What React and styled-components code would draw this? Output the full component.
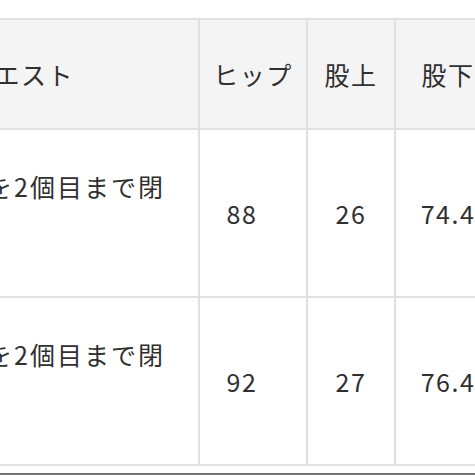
import React from 'react';
import styled, { createGlobalStyle } from 'styled-components';

const GlobalStyle = createGlobalStyle`
  html, body {
    margin: 0;
    padding: 0;
    background: #ffffff;
  }
  body {
    font-family: "Noto Sans CJK JP", "Noto Sans", sans-serif;
    color: #303030;
  }
`;

const Viewport = styled.div`
  width: 475px;
  height: 475px;
  overflow: hidden;
  padding-top: 18px;
  box-sizing: border-box;
`;

const SizeTable = styled.div`
  display: grid;
  grid-template-columns: 356px 108px 88px 106px;
  grid-template-rows: 110px;
  grid-auto-rows: 168px;
  margin-left: -158px;
  width: max-content;
  border-top: 2px solid #e0e0e0;
  border-left: 2px solid #e0e0e0;
`;

const Cell = styled.div`
  box-sizing: border-box;
  display: flex;
  align-items: center;
  justify-content: center;
  padding: 0 ${(p) => p.$padRight || 8}px 0 8px;
  border-right: 2px solid #e0e0e0;
  border-bottom: 2px solid #e0e0e0;
  background: ${(p) => (p.$head ? '#f4f4f4' : '#ffffff')};
  font-size: 25px;
  letter-spacing: 1.5px;
  line-height: 28px;
  white-space: nowrap;
`;

const NoteCell = styled(Cell)`
  align-items: flex-start;
  justify-content: flex-start;
  padding: 42px 8px 0 8px;
  letter-spacing: 2px;
`;

const BottomRule = styled.div`
  margin-top: 7px;
  height: 2px;
  background: #727272;
`;

const headers = ['ウエスト', 'ヒップ', '股上', '股下'];

const rows = [
  { note: '上のボタンを2個目まで閉', hip: '88', rise: '26', inseam: '74.4' },
  { note: '上のボタンを2個目まで閉', hip: '92', rise: '27', inseam: '76.4' },
];

export default function App() {
  return (
    <>
      <GlobalStyle />
      <Viewport>
        <SizeTable>
          {headers.map((h) => (
            <Cell key={h} $head>
              {h}
            </Cell>
          ))}
          {rows.map((r) => (
            <React.Fragment key={r.hip}>
              <NoteCell>{r.note}</NoteCell>
              <Cell $padRight={30}>{r.hip}</Cell>
              <Cell>{r.rise}</Cell>
              <Cell>{r.inseam}</Cell>
            </React.Fragment>
          ))}
        </SizeTable>
        <BottomRule />
      </Viewport>
    </>
  );
}
